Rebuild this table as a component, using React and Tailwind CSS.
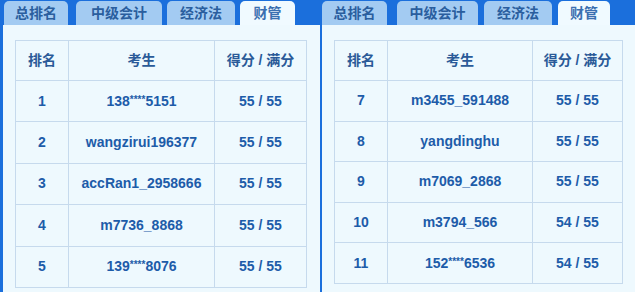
const tabs = ['总排名', '中级会计', '经济法', '财管']

const left = {
  tabs: [
    ['ml-[1px] w-[64px]', false],
    ['ml-[8px] w-[86px]', false],
    ['ml-[5px] w-[68px]', false],
    ['ml-[5px] w-[55px]', true],
  ],
  cols: ['w-[53px]', 'w-[146px]', 'w-[92px]'],
  rowH: 'h-[41.4px]',
  rows: [
    ['1', '138****5151', '55 / 55'],
    ['2', 'wangzirui196377', '55 / 55'],
    ['3', 'accRan1_2958666', '55 / 55'],
    ['4', 'm7736_8868', '55 / 55'],
    ['5', '139****8076', '55 / 55'],
  ],
}

const right = {
  tabs: [
    ['ml-0 w-[65px]', false],
    ['ml-[10px] w-[81px]', false],
    ['ml-[6px] w-[68px]', false],
    ['ml-[6px] w-[52px]', true],
  ],
  cols: ['w-[53px]', 'w-[145px]', 'w-[90px]'],
  rowH: 'h-[40.6px]',
  rows: [
    ['7', 'm3455_591488', '55 / 55'],
    ['8', 'yangdinghu', '55 / 55'],
    ['9', 'm7069_2868', '55 / 55'],
    ['10', 'm3794_566', '54 / 55'],
    ['11', '152****6536', '54 / 55'],
  ],
}

// masked phone numbers: the stars sit small and high
function Cell({ text }) {
  if (!text.includes('****')) return text
  const [a, b] = text.split('****')
  return (
    <>
      {a}
      <span className="relative -top-[3px] text-[10px]">****</span>
      {b}
    </>
  )
}

function Panel({ data, className }) {
  return (
    <div className={`flex flex-col bg-[#eef9fe] border-l-[#1b6fdc] ${className}`}>
      {/* tab bar */}
      <div className="flex h-[25px] items-end bg-[#1b6fdc]">
        {tabs.map((t, i) => (
          <div
            key={t}
            className={`${data.tabs[i][0]} flex h-[24px] items-center justify-center rounded-t-[5px] text-[14px] font-bold ${
              data.tabs[i][1] ? 'bg-[#f0faff] text-[#3a6fb0]' : 'bg-[#a3cbf2] text-[#2a5e9e]'
            }`}
          >
            {t}
          </div>
        ))}
      </div>

      {/* table */}
      <div className="px-[12px] pt-[15px]">
        <table className="table-fixed border-collapse text-[#1d5ca9]">
          <thead>
            <tr className="h-[40px]">
              {['排名', '考生', '得分 / 满分'].map((h, i) => (
                <th key={h} className={`${data.cols[i]} border border-[#c6daed] text-[14px] font-bold text-[#2a5a98]`}>
                  {h}
                </th>
              ))}
            </tr>
          </thead>
          <tbody>
            {data.rows.map((r) => (
              <tr key={r[0]} className={data.rowH}>
                {r.map((c, i) => (
                  <td key={i} className="border border-[#c6daed] text-center text-[14px] font-bold">
                    <Cell text={c} />
                  </td>
                ))}
              </tr>
            ))}
          </tbody>
        </table>
      </div>
    </div>
  )
}

export default function App() {
  return (
    <div
      className="flex h-[292px] w-[635px] overflow-hidden"
      style={{ fontFamily: '"Liberation Sans", Arial, "Noto Sans CJK SC", sans-serif' }}
    >
      <Panel data={left} className="w-[320px] border-l-[3px]" />
      <Panel data={right} className="w-[315px] border-l-[2px]" />
    </div>
  )
}
